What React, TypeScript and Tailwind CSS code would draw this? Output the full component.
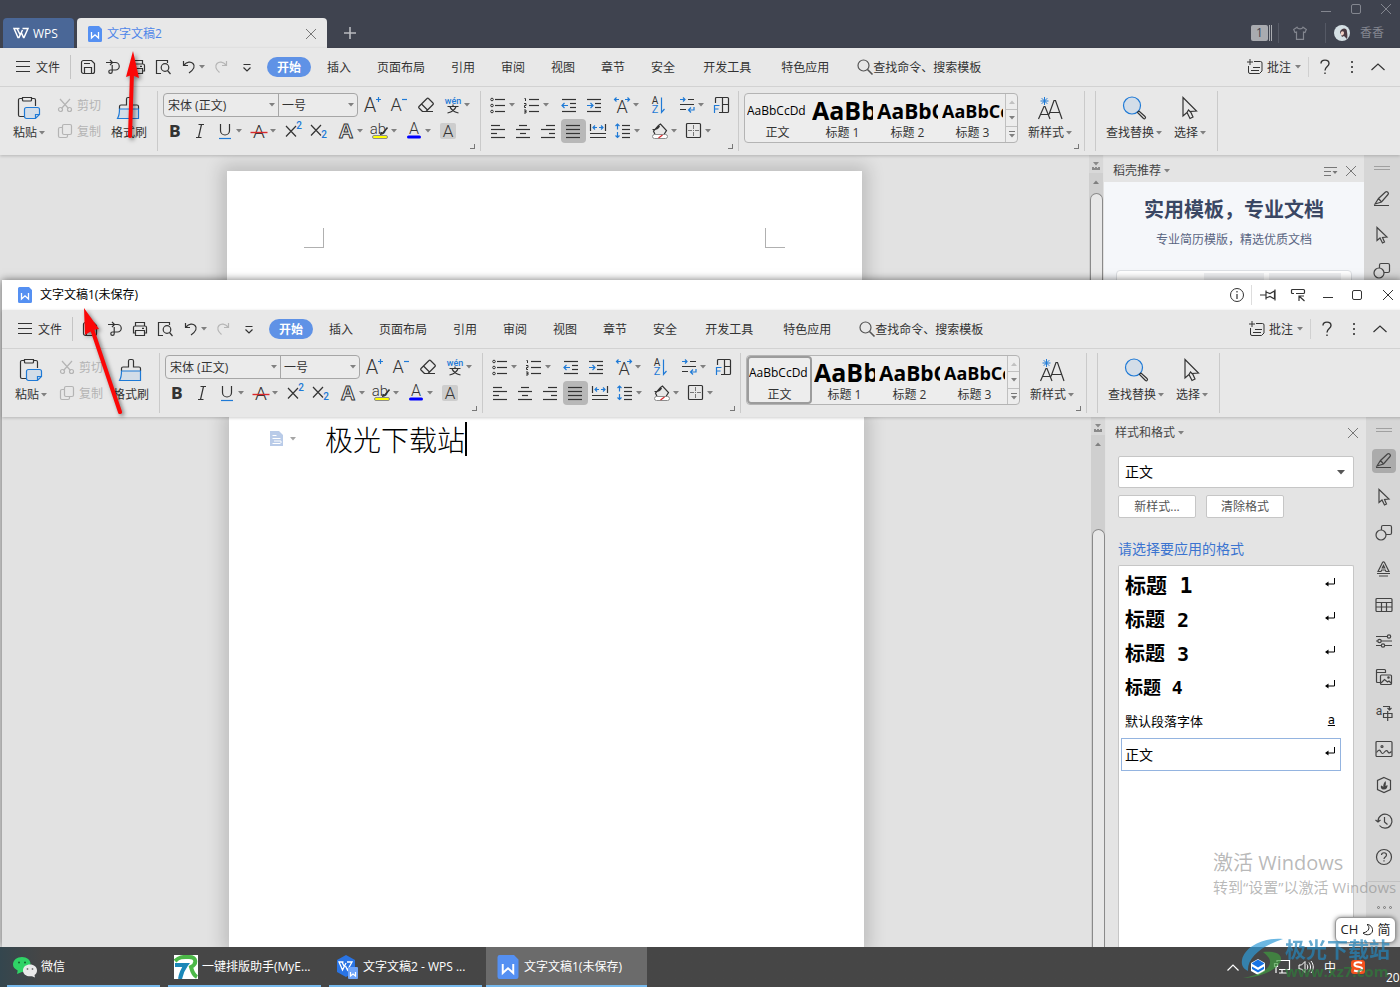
import { useState } from "react";
import type { ReactNode } from "react";
import { clsx } from "clsx";

type IconProps = {
  w?: number;
  h?: number;
  className?: string;
  children: ReactNode;
};

const BLUE = "#1f7ad6";

function Svg({ w = 22, h = 20, className, children }: IconProps) {
  return (
    <svg
      width={w}
      height={h}
      viewBox={`0 0 ${w} ${h}`}
      fill="none"
      stroke="currentColor"
      strokeWidth="1.2"
      className={clsx("shrink-0 overflow-visible", className)}
      aria-hidden="true"
    >
      {children}
    </svg>
  );
}

function Glyph({ x, y, size, color = "currentColor", weight = 300, children }: {
  x: number;
  y: number;
  size: number;
  color?: string;
  weight?: number;
  children: ReactNode;
}) {
  return (
    <text
      x={x}
      y={y}
      fontSize={size}
      fontWeight={weight}
      fontFamily='Roboto, "Noto Sans CJK SC", sans-serif'
      textAnchor="middle"
      fill={color}
      stroke="none"
    >
      {children}
    </text>
  );
}

function Caret({ className }: { className?: string }) {
  return (
    <svg width="6" height="4" viewBox="0 0 6 4" className={clsx("shrink-0 fill-[#808080]", className)} aria-hidden="true">
      <path d="M0 0h6L3 3.5z" />
    </svg>
  );
}

function Lines({ rows }: { rows: number[][] }) {
  return (
    <>
      {rows.map(([x1, x2, y]) => (
        <path key={y} d={`M${x1} ${y}H${x2}`} />
      ))}
    </>
  );
}

const icons = {
  save: (
    <Svg>
      <path d="M4.500 5.500a2 2 0 0 1 2-2h8l3 3v8a2 2 0 0 1-2 2h-9a2 2 0 0 1-2-2zM7.500 16v-5.500h7V16M7 6.500h6" />
    </Svg>
  ),
  exportPdf: (
    <Svg>
      <path d="M4 5.500h6M8 3l2.500 2.500L8 8M11 5.500h2.500a3.700 3.700 0 0 1 0 7.500H8.500a1.700 1.700 0 1 0 1.700 1.700V8" />
    </Svg>
  ),
  print: (
    <Svg>
      <path d="M6.500 7V3.500h9V7M6.500 14h-2V8.500a1.500 1.500 0 0 1 1.500-1.500h10a1.500 1.500 0 0 1 1.500 1.500V14h-2M6.500 11.500h9v5h-9zM13 9.300h2" />
    </Svg>
  ),
  preview: (
    <Svg>
      <path d="M9 16.500H4.500v-13h11V6" />
      <circle cx="13" cy="10.500" r="3.800" />
      <path d="M15.500 13.500l3 3.500" />
    </Svg>
  ),
  undo: (
    <Svg>
      <path d="M5.500 4v4.500H10M6 8C9 4.500 13 4.500 15 6.500c2.500 2.500 1 6-4 9.500" />
    </Svg>
  ),
  redo: (
    <Svg className="text-[#b5b5b5]">
      <path d="M16.500 4v4.500H12M16 8C13 4.500 9 4.500 7 6.500 4.500 9 6 12.500 9.500 15.500" />
    </Svg>
  ),
  more: (
    <Svg>
      <path d="M7.500 7.500h7M7.500 10.500l3.500 3.500 3.500-3.500" />
    </Svg>
  ),
  cut: (
    <Svg w={16} h={16}>
      <path d="M3 2l8.500 9.500M13 2L4.500 11.500" />
      <circle cx="3.500" cy="12.500" r="2" />
      <circle cx="12.500" cy="12.500" r="2" />
    </Svg>
  ),
  copy: (
    <Svg w={16} h={16}>
      <rect x="5.500" y="1.500" width="9" height="10" rx="1.500" />
      <path d="M5 4.500H3a1.500 1.500 0 0 0-1.500 1.500v7A1.500 1.500 0 0 0 3 14.500h6A1.500 1.500 0 0 0 10.500 13v-1" />
    </Svg>
  ),
  paste: (
    <Svg w={24} h={24}>
      <path d="M7.500 20.500H3a1.500 1.500 0 0 1-1.500-1.500V4A1.500 1.500 0 0 1 3 2.500h2M15 2.500h2a1.500 1.500 0 0 1 1.500 1.500v6" />
      <path d="M5.500 1.500h9V4a1 1 0 0 1-1 1h-7a1 1 0 0 1-1-1z" />
      <path d="M9.500 11.500h11a2 2 0 0 1 2 2v5l-4 4h-9a2 2 0 0 1-2-2v-7a2 2 0 0 1 2-2zM18.500 22.500v-4h4" fill="#d3dde8" stroke={BLUE} />
    </Svg>
  ),
  brush: (
    <Svg w={24} h={24}>
      <path d="M2.500 13V10.500A1.500 1.500 0 0 1 4 9h5.500V3A1.500 1.500 0 0 1 11 1.500h2A1.500 1.500 0 0 1 14.500 3v6H20a1.500 1.500 0 0 1 1.500 1.500V13" />
      <path d="M2.500 13h19v9.500H.5C2 20 2.500 17 2.500 13z" fill="#d3dde8" stroke={BLUE} />
    </Svg>
  ),
  grow: (
    <Svg>
      <Glyph x={9} y={17} size={20}>A</Glyph>
      <path d="M15 4.500h5M17.500 2v5" stroke={BLUE} />
    </Svg>
  ),
  shrink: (
    <Svg>
      <Glyph x={8} y={16} size={18}>A</Glyph>
      <path d="M14 4.500h5" stroke={BLUE} />
    </Svg>
  ),
  eraser: (
    <Svg>
      <path d="M7.500 16.500l-3.500-3.500a1 1 0 0 1 0-1.500L12 3.500a1 1 0 0 1 1.500 0l4.500 4.500a1 1 0 0 1 0 1.500L11 16.500M6.500 9l6 6M7 16.500h11" />
    </Svg>
  ),
  pinyin: (
    <Svg>
      <Glyph x={11} y={9} size={9} color={BLUE} weight={500}>wén</Glyph>
      <path d="M11 9.500v2M5.500 11.500h11M8 11.500c1 3.500 4 5.500 8.500 6.500M14 11.500c-1 3.500-4 5.500-8.500 6.500" />
    </Svg>
  ),
  bold: <Svg><Glyph x={11} y={16} size={17} weight={900}>B</Glyph></Svg>,
  italic: (
    <Svg>
      <path d="M9.500 3.500H15M7 16.500h5.500M12.500 3.500l-3 13" />
    </Svg>
  ),
  underline: (
    <Svg>
      <path d="M6.500 3v6.500a4.500 4.500 0 0 0 9 0V3" />
      <path d="M5 17.500h12" stroke={BLUE} />
    </Svg>
  ),
  strike: (
    <Svg>
      <Glyph x={11} y={17} size={19}>A</Glyph>
      <path d="M2.500 11.500h17" stroke="#d9292d" strokeWidth="1.400" />
    </Svg>
  ),
  sup: (
    <Svg>
      <path d="M4 5l10 10.500M14 5L4 15.500" />
      <Glyph x={17} y={8} size={10} color={BLUE} weight={500}>2</Glyph>
    </Svg>
  ),
  sub: (
    <Svg>
      <path d="M4 4l10 10.500M14 4L4 14.500" />
      <Glyph x={17} y={17} size={10} color={BLUE} weight={500}>2</Glyph>
    </Svg>
  ),
  effect: (
    <Svg>
      <text x="11" y="17" fontSize="20" fontWeight="700" fontFamily='"Liberation Sans", sans-serif' textAnchor="middle" fill="#efefef" strokeWidth="1">
        A
      </text>
    </Svg>
  ),
  highlight: (
    <Svg>
      <Glyph x={9} y={13} size={15}>ab</Glyph>
      <path d="M18.500 6.500l-5 6-1.500.5.500-2" strokeWidth="1.600" />
      <rect x="3.500" y="14.500" width="15" height="3" rx="1.500" fill="#ffff00" stroke="#8c8c8c" strokeWidth="1" />
    </Svg>
  ),
  fontColor: (
    <Svg>
      <Glyph x={11} y={13} size={16}>A</Glyph>
      <rect x="4" y="14.500" width="14" height="3" rx="1.500" fill="#0000ff" stroke="none" />
    </Svg>
  ),
  shade: (
    <Svg>
      <rect x="3" y="2" width="16" height="16" rx="2" fill="#cdcdcd" stroke="none" />
      <Glyph x={11} y={16} size={17}>A</Glyph>
    </Svg>
  ),
  bullets: (
    <Svg>
      <circle cx="5" cy="4.500" r="1.300" strokeWidth="1" />
      <circle cx="5" cy="10.500" r="1.300" strokeWidth="1" />
      <circle cx="5" cy="16.500" r="1.300" strokeWidth="1" />
      <Lines rows={[[8, 18, 4.5], [8, 18, 10.5], [8, 18, 16.5]]} />
    </Svg>
  ),
  numbers: (
    <Svg>
      <path d="M3.500 3.500h1V6M3 8.500h2v2H3.500v2H5M3 15h2v3H3M3.500 16.500H5" strokeWidth="1" />
      <Lines rows={[[8, 18, 4.5], [8, 18, 10.5], [8, 18, 16.5]]} />
    </Svg>
  ),
  outdent: (
    <Svg>
      <Lines rows={[[4, 18, 4.5], [12, 18, 8.5], [12, 18, 12.5], [4, 18, 16.5]]} />
      <path d="M10 10.500H4M6.500 8L4 10.500 6.500 13" stroke={BLUE} />
    </Svg>
  ),
  indent: (
    <Svg>
      <Lines rows={[[4, 18, 4.5], [12, 18, 8.5], [12, 18, 12.5], [4, 18, 16.5]]} />
      <path d="M4 10.500h6M7.500 8l2.500 2.500L7.500 13" stroke={BLUE} />
    </Svg>
  ),
  scale: (
    <Svg>
      <Glyph x={11} y={18} size={18}>A</Glyph>
      <path d="M8 4.500H3.500M5.500 2.500l-2 2 2 2M14 4.500h4.500M16.500 2.500l2 2-2 2" stroke={BLUE} />
    </Svg>
  ),
  sort: (
    <Svg>
      <Glyph x={8} y={9} size={10} weight={400}>A</Glyph>
      <Glyph x={8} y={18} size={11} color={BLUE} weight={400}>Z</Glyph>
      <path d="M14.500 2.500v15l3-3.500" stroke={BLUE} />
    </Svg>
  ),
  wrap: (
    <Svg>
      <path d="M4 4.500h5M7 2.500l2 2-2 2M18 12v3h-5M15 12.500L12.500 15l2.500 2.500" stroke={BLUE} />
      <path d="M12 4.500h6M4 9.500h14M4 14.500h6" />
    </Svg>
  ),
  frame: (
    <Svg>
      <path d="M5.500 8V3.500a1 1 0 0 1 1-1h11a1 1 0 0 1 1 1v13a1 1 0 0 1-1 1H9M12.500 3v14M12 9.500h6.500" />
      <path d="M4.500 18v-7.500h5M4.500 14h4" stroke={BLUE} />
    </Svg>
  ),
  left: <Svg><Lines rows={[[4, 13, 4.5], [4, 18, 8.5], [4, 10, 12.5], [4, 18, 16.5]]} /></Svg>,
  center: <Svg><Lines rows={[[7, 15, 4.5], [4, 18, 8.5], [8, 14, 12.5], [4, 18, 16.5]]} /></Svg>,
  right: <Svg><Lines rows={[[9, 18, 4.5], [4, 18, 8.5], [12, 18, 12.5], [4, 18, 16.5]]} /></Svg>,
  justify: <Svg><Lines rows={[[4, 18, 4.5], [4, 18, 8.5], [4, 18, 12.5], [4, 18, 16.5]]} /></Svg>,
  distribute: (
    <Svg>
      <path d="M3.500 3v7M18.500 3v7M3 12.500h16M3 16.500h16" />
      <path d="M10 6.500H6M8 4.500l-2 2 2 2M12 6.500h4M14 4.500l2 2-2 2" stroke={BLUE} />
    </Svg>
  ),
  spacing: (
    <Svg>
      <Lines rows={[[10, 18, 4.5], [10, 18, 8.5], [10, 18, 12.5], [10, 18, 16.5]]} />
      <path d="M5.500 3v5.500M3.500 5l2-2 2 2M5.500 11v5.500M3.500 14.500l2 2 2-2" stroke={BLUE} />
    </Svg>
  ),
  bucket: (
    <Svg>
      <path d="M9.500 4.500L11.500 3l6 6.500-2.500 4H6L4.500 10zM3.500 8.500c4 0 6-1 7-3.500" />
      <rect x="3.500" y="13.500" width="15" height="4" rx="2" fill="#fff" stroke="#8c8c8c" strokeWidth="1" />
      <path d="M9.500 17l4-3" stroke="#d9292d" />
    </Svg>
  ),
  borders: (
    <Svg>
      <rect x="3.500" y="2.500" width="14" height="14" rx="1" />
      <path d="M10.500 4v4M10.500 11v4M5 9.500h4M12 9.500h4M10 9.500h1" strokeWidth="1" stroke="#777" />
    </Svg>
  ),
  newStyle: (
    <Svg w={24} h={24}>
      <path d="M6.500 1v8M2.500 5h8M3.700 2.200l5.600 5.600M9.300 2.200L3.700 7.800" stroke={BLUE} strokeWidth="1" />
      <path d="M.5 23L6 10.500h1L12 23M2.500 18.500h8M11 18.500L16 4.500h1.500L24 23M12 16.500h9.500" />
    </Svg>
  ),
  find: (
    <Svg w={24} h={24}>
      <circle cx="10" cy="9.500" r="8.500" fill="#d3dde8" stroke={BLUE} />
      <path d="M15.500 16.500l1.500-1.500 6 5.500a1.200 1.200 0 0 1-1.500 2z" />
    </Svg>
  ),
  pointer: (
    <Svg w={24} h={24}>
      <path d="M5 1.500V20l4-3.500L12 22.500l3-1.500-2.500-5.500 6-.5zM9 16.500l1.500-2.500 2 2" />
    </Svg>
  ),
};

type IconName = keyof typeof icons;

type Tool = { icon: IconName; label: string; menu?: boolean; gap?: string };

const fontRow: Tool[] = [
  { icon: "grow", label: "增大字号", gap: "ml-0.5" },
  { icon: "shrink", label: "减小字号", gap: "ml-0.5" },
  { icon: "eraser", label: "清除格式", gap: "ml-0.5" },
  { icon: "pinyin", label: "拼音指南", menu: true, gap: "ml-0.5" },
];

const formatRow: Tool[] = [
  { icon: "bold", label: "加粗" },
  { icon: "italic", label: "倾斜" },
  { icon: "underline", label: "下划线", menu: true },
  { icon: "strike", label: "删除线", menu: true },
  { icon: "sup", label: "上标" },
  { icon: "sub", label: "下标" },
  { icon: "effect", label: "文字效果", menu: true, gap: "ml-[3px]" },
  { icon: "highlight", label: "突出显示", menu: true },
  { icon: "fontColor", label: "字体颜色", menu: true },
  { icon: "shade", label: "字符底纹" },
];

const listRow: Tool[] = [
  { icon: "bullets", label: "项目符号", menu: true },
  { icon: "numbers", label: "编号", menu: true },
  { icon: "outdent", label: "减少缩进量", gap: "ml-[3px]" },
  { icon: "indent", label: "增加缩进量" },
  { icon: "scale", label: "中文版式", menu: true, gap: "ml-[3px]" },
  { icon: "sort", label: "排序", gap: "ml-0.5" },
  { icon: "wrap", label: "显示段落标记", menu: true, gap: "ml-1" },
  { icon: "frame", label: "制表位" },
];

const alignRow: Tool[] = [
  { icon: "left", label: "左对齐" },
  { icon: "center", label: "居中" },
  { icon: "right", label: "右对齐" },
  { icon: "justify", label: "两端对齐" },
  { icon: "distribute", label: "分散对齐" },
  { icon: "spacing", label: "行距", menu: true },
  { icon: "bucket", label: "底纹颜色", menu: true, gap: "ml-[3px]" },
  { icon: "borders", label: "边框", menu: true },
];

function ToolRow({ tools, active }: { tools: Tool[]; active?: IconName }) {
  return (
    <div className="flex h-[26px] items-center">
      {tools.map((t) => (
        <button
          key={t.icon}
          aria-label={t.label}
          className={clsx(
            "flex h-6 shrink-0 items-center rounded pl-px",
            t.menu ? "w-[34px]" : "w-[25px]",
            t.gap,
            active === t.icon && "bg-[#b8b8b8]"
          )}
        >
          {icons[t.icon]}
          {t.menu && <Caret />}
        </button>
      ))}
    </div>
  );
}

function BigButton({ icon, label, menu, className }: { icon: IconName; label: string; menu?: boolean; className?: string }) {
  return (
    <button className={clsx("flex shrink-0 flex-col items-center pt-1", className)}>
      {icons[icon]}
      <span className="mt-1 flex h-[18px] items-center gap-0.5 whitespace-nowrap">
        {label}
        {menu && <Caret />}
      </span>
    </button>
  );
}

function Launcher() {
  return <span className="absolute right-[5px] bottom-0.5 size-[5px] border-r border-b border-[#777]" />;
}

function Group({ className, children }: { className?: string; children?: ReactNode }) {
  return (
    <div className={clsx("relative my-1 flex shrink-0 border-r border-[#cacaca] pt-px", className)}>{children}</div>
  );
}

const styleItems = [
  { name: "正文", sample: "AaBbCcDd", className: "text-xs" },
  { name: "标题 1", sample: "AaBb", className: "text-[25px] font-bold" },
  { name: "标题 2", sample: "AaBbC", className: "text-[21px] font-bold" },
  { name: "标题 3", sample: "AaBbCc", className: "text-lg font-bold" },
];

function StyleGallery({ selected }: { selected?: string }) {
  return (
    <div className="mt-px ml-[5px] flex h-[50px] w-[274px] rounded border border-[#b4b4b4] bg-[#ededed]">
      {styleItems.map((s) => (
        <button
          key={s.name}
          className={clsx(
            "flex w-[65px] shrink-0 flex-col overflow-hidden border-2 pt-px",
            selected === s.name ? "rounded-sm border-[#9c9c9c]" : "border-transparent"
          )}
        >
          <span className={clsx("flex h-[26px] w-full items-center overflow-hidden pt-px font-['Open_Sans',sans-serif] text-black", s.className)}>
            {s.sample}
          </span>
          <span className="h-4 w-full pt-0.5 text-center leading-4">{s.name}</span>
        </button>
      ))}
      <div className="flex flex-1 flex-col divide-y divide-[#c0c0c0] border-l border-[#c0c0c0]">
        <button aria-label="上一行" className="flex flex-1 items-center justify-center">
          <Caret className="rotate-180 opacity-40" />
        </button>
        <button aria-label="下一行" className="flex flex-1 items-center justify-center">
          <Caret />
        </button>
        <button aria-label="更多样式" className="flex flex-1 flex-col items-center justify-center gap-0.5">
          <span className="h-px w-1.5 bg-[#777]" />
          <Caret />
        </button>
      </div>
    </div>
  );
}

const menuTabs = ["插入", "页面布局", "引用", "审阅", "视图", "章节", "安全", "开发工具", "特色应用"];

function MenuBar() {
  const quick: { icon: IconName; label: string; className: string }[] = [
    { icon: "save", label: "保存", className: "ml-[6px]" },
    { icon: "exportPdf", label: "输出为PDF", className: "ml-[3px]" },
    { icon: "print", label: "打印", className: "ml-[3px]" },
    { icon: "preview", label: "打印预览", className: "ml-[3px]" },
    { icon: "undo", label: "撤销", className: "ml-1" },
  ];

  return (
    <div className="box-content flex h-[38px] shrink-0 items-center border-b border-[#d2d2d2] whitespace-nowrap">
      <button className="ml-4 flex items-center gap-[6px]">
        <Svg w={14} h={14}>
          <path d="M0 1.500h14M0 6.500h14M0 11.500h14" />
        </Svg>
        <span className="pt-0.5">文件</span>
      </button>
      <span className="ml-[10px] h-6 w-px bg-[#c4c4c4]" />
      {quick.map((q) => (
        <button key={q.icon} aria-label={q.label} className={q.className}>
          {icons[q.icon]}
        </button>
      ))}
      <Caret className="-ml-px" />
      <button aria-label="恢复" className="ml-[5px]">{icons.redo}</button>
      <button aria-label="自定义快速访问" className="ml-1">{icons.more}</button>
      <button className="ml-[9px] h-5 w-11 shrink-0 rounded-full bg-[#5f92e6] pt-px font-bold text-white">开始</button>
      <div className="ml-[3px] flex pt-0.5">
        {menuTabs.map((t, i) => (
          <button key={t} className={i > 6 ? "px-[15px]" : "px-[13px]"}>
            {t}
          </button>
        ))}
      </div>
      <label className="ml-[13px] flex min-w-0 items-center">
        <Svg w={16} h={16} className="text-[#555]">
          <circle cx="6.500" cy="6.500" r="5.500" />
          <path d="M10.500 10.500l5 5" strokeWidth="1.600" />
        </Svg>
        <input
          aria-label="查找命令、搜索模板"
          placeholder="查找命令、搜索模板"
          className="w-32 bg-transparent pt-px outline-none placeholder:text-[#333] placeholder:opacity-100"
        />
      </label>
      <div className="ml-auto flex shrink-0 items-center pr-[15px]">
        <button className="flex items-center gap-1">
          <Svg w={16} h={16}>
            <path d="M1.500 7v6a1.500 1.500 0 0 0 1.500 1.500h9.500l2.500-2.500V4A1.500 1.500 0 0 0 13.500 2.500H7M3 0v6M0 3h6M6 8.500h7M4 11.500h8" strokeWidth="1" />
          </Svg>
          <span className="pt-0.5">批注</span>
          <Caret />
        </button>
        <span className="ml-[7px] h-5 w-px bg-[#d0d0d0]" />
        <button aria-label="帮助" className="ml-2">
          <Svg w={16} h={16}>
            <path d="M4 4.500C4 0 12 0 12 4.500c0 3-4 3-4 7M8 13.500V15" strokeWidth="1.400" />
          </Svg>
        </button>
        <button aria-label="更多" className="ml-[15px] flex w-2 flex-col items-center gap-[3px]">
          <span className="size-0.5 bg-[#555]" />
          <span className="size-0.5 bg-[#555]" />
          <span className="size-0.5 bg-[#555]" />
        </button>
        <button aria-label="折叠功能区" className="ml-[15px]">
          <Svg w={14} h={8}>
            <path d="M.5 7L7 1l6.500 6" />
          </Svg>
        </button>
      </div>
    </div>
  );
}

function Ribbon({ selectedStyle }: { selectedStyle?: string }) {
  return (
    <div className="relative z-10 shrink-0 bg-[#e8e8e8] text-xs text-[#333] shadow-[0_1px_3px_rgba(0,0,0,0.2)]">
      <MenuBar />
      <div className="flex h-[68px]">
        <Group className="w-[158px] pl-[11px]">
          <BigButton icon="paste" label="粘贴" menu className="w-9" />
          <div className="ml-[10px] flex flex-col text-[#b4b4b4]">
            <button className="flex h-[26px] items-center gap-1">
              {icons.cut}
              <span className="pt-0.5">剪切</span>
            </button>
            <button className="flex h-[26px] items-center gap-1">
              {icons.copy}
              <span className="pt-0.5">复制</span>
            </button>
          </div>
          <BigButton icon="brush" label="格式刷" className="ml-[6px] w-11" />
        </Group>

        <Group className="w-[323px] flex-col pl-[5px]">
          <div className="flex items-center">
            <div className="flex h-6 w-[195px] shrink-0 rounded border border-[#a6a6a6] bg-[#ebebeb]">
              <label className="flex w-[115px] items-center border-r border-[#a6a6a6] pr-[3px]">
                <select aria-label="字体" className="min-w-0 flex-1 appearance-none bg-transparent pt-0.5 pl-1 outline-none">
                  <option>宋体 (正文)</option>
                </select>
                <Caret />
              </label>
              <label className="flex flex-1 items-center pr-[3px]">
                <select aria-label="字号" className="min-w-0 flex-1 appearance-none bg-transparent pt-0.5 pl-[3px] outline-none">
                  <option>一号</option>
                </select>
                <Caret />
              </label>
            </div>
            <ToolRow tools={fontRow} />
          </div>
          <ToolRow tools={formatRow} />
          <Launcher />
        </Group>

        <Group className="w-[258px] flex-col pl-[5px]">
          <ToolRow tools={listRow} />
          <ToolRow tools={alignRow} active="justify" />
          <Launcher />
        </Group>

        <Group className="w-[346px]">
          <StyleGallery selected={selectedStyle} />
          <BigButton icon="newStyle" label="新样式" menu className="ml-2 w-12" />
          <Launcher />
        </Group>
        <Group className="w-[11px]" />
        <Group className="w-[122px] pl-2">
          <BigButton icon="find" label="查找替换" menu className="w-[60px]" />
          <BigButton icon="pointer" label="选择" menu className="ml-2 w-9" />
        </Group>
      </div>
    </div>
  );
}

const sideIcons: { label: string; art: ReactNode }[] = [
  { label: "样式和格式", art: <path d="M1 15.500h15M2 14l3.500-5.500L12.500 2a1.500 1.500 0 0 1 2 0l.5.500a1.500 1.500 0 0 1 0 2L8.500 12 2 14zM5.500 8.500l3 3.500" /> },
  { label: "选择窗格", art: <path d="M4 1.500v13l3-2.500 2.500 5 2-1-2-4.500 4.500-.5z" /> },
  { label: "形状", art: <><circle cx="6" cy="11" r="5" /><path d="M6.500 6V3A1.500 1.500 0 0 1 8 1.500h7A1.500 1.500 0 0 1 16.500 3v6a1.500 1.500 0 0 1-1.500 1.500h-4" /></> },
  { label: "艺术字", art: <><path d="M3 11.500L7.500 2.500a1.200 1.200 0 0 1 2 0L14 11.500h-3l-.7-1.500H6.700L6 11.500zM7.300 8h2.400L8.500 5.500z" /><path d="M2 13.500h13M4 16h9" /></> },
  { label: "表格", art: <path d="M1 3.500a1 1 0 0 1 1-1h14a1 1 0 0 1 1 1v11a1 1 0 0 1-1 1H2a1 1 0 0 1-1-1zM1 6.500h16M1 11h16M6.500 6.500v9M11.500 6.500v9" /> },
  { label: "设置", art: <><path d="M1 4.500h11M1 9h2M6 9h11M1 13.500h5M9.500 13.500H17" /><circle cx="14" cy="4.500" r="1.700" /><circle cx="4.500" cy="9" r="1.700" /><circle cx="8" cy="13.500" r="1.700" /></> },
  { label: "素材", art: <><path d="M5 14.500H2.500a1 1 0 0 1-1-1v-11a1 1 0 0 1 1-1h7a1 1 0 0 1 1 1V5M1.500 4.500h9" /><rect x="5.500" y="7" width="11" height="9.500" rx="1" /><path d="M6 15l3.500-3.500 3 2.500 1.500-1 2.500 2.500" /><circle cx="13.500" cy="9.500" r=".7" /></> },
  { label: "翻译", art: <><text x="4" y="11" fontSize="12" textAnchor="middle" fill="currentColor" stroke="none" fontFamily="Roboto, sans-serif">a</text><path d="M8 2.500h6.500V6M12.500 4l2 2 2-2M8.500 9.500h8.500v4H8.500zM12.700 7v10" /></> },
  { label: "图片", art: <><rect x="1" y="1.500" width="16" height="15" rx="1" /><circle cx="7" cy="6.500" r="1" /><path d="M1.500 12.500C4 9 5 10 6 12s2 2 3.500 0 3-1.500 3.500 0 2 1 3.500-.5" /></> },
  { label: "稻壳", art: <><path d="M9 1.500l6.500 3v9L9 16.500l-6.500-3v-9z" /><path d="M9 13.500c-3 0-3.500-2-3-4 1 .2 1.700.7 2.300 1.500C8 8.500 9 6.500 10.500 5c.7 2 .3 3.500 0 5l2-1c.2 2.500-1 4.500-3.500 4.500z" fill="currentColor" stroke="none" /></> },
  { label: "历史", art: <path d="M3 9a7 7 0 1 1 1.500 4.500M.5 8L3 10l2.500-2M9.500 5v5l3 2.500" /> },
  { label: "帮助", art: <><circle cx="9" cy="9" r="7.500" /><path d="M6.500 7C6.500 4 11.500 4 11.500 7c0 2-2.500 2-2.500 4M9 12.300v1.200" /></> },
];

function SideBar({ active }: { active?: string }) {
  return (
    <aside className="flex w-9 shrink-0 flex-col items-center overflow-hidden bg-[#d6d6d6] pt-[11px] text-[#444]">
      <span className="h-1 w-4 shrink-0 border-y border-[#a0a0a0]" />
      <div className="mt-[17px] flex flex-col gap-3">
        {sideIcons.map((s) => (
          <button
            key={s.label}
            aria-label={s.label}
            className={clsx("flex size-6 items-center justify-center rounded pr-px", active === s.label && "bg-[#ababab]")}
          >
            <Svg w={18} h={18}>{s.art}</Svg>
          </button>
        ))}
      </div>
      <span className="mt-3 h-px w-8 shrink-0 bg-[#c2c2c2]" />
      <button aria-label="更多" className="mt-6 flex gap-[3px]">
        <span className="size-[3px] rounded-full border border-[#777]" />
        <span className="size-[3px] rounded-full border border-[#777]" />
        <span className="size-[3px] rounded-full border border-[#777]" />
      </button>
    </aside>
  );
}

function ScrollBar({ thumb }: { thumb: string }) {
  return (
    <div className="flex w-[14px] shrink-0 flex-col items-center bg-[#cfcfcf]">
      <div className="flex h-[18px] w-full shrink-0 items-center justify-center bg-[#d8d8d8] pt-1">
        <svg width="8" height="8" viewBox="0 0 8 8" className="fill-[#8a8a8a]" aria-hidden="true">
          <path d="M1 0h6L4 3.500zM0 5h2v1h1V5h2v1h1V5h2v3H0z" />
        </svg>
      </div>
      <Caret className="mt-[7px] rotate-180" />
      <div className={clsx("w-[13px] flex-1 rounded-t-full border border-b-0 border-[#8a8a8a] bg-[#e8e8e8]", thumb)} />
    </div>
  );
}

function PaneHeader({ title, children }: { title: string; children: ReactNode }) {
  return (
    <div className="flex h-[27px] shrink-0 items-center pt-1 pr-2 pl-[9px] text-[#444]">
      <button className="flex items-center gap-[3px]">
        {title}
        <Caret />
      </button>
      <div className="ml-auto flex items-center gap-2 text-[#777]">{children}</div>
    </div>
  );
}

function CloseIcon() {
  return (
    <svg width="10" height="10" viewBox="0 0 10 10" stroke="currentColor" strokeWidth="1" aria-hidden="true">
      <path d="M0 0l10 10M10 0L0 10" />
    </svg>
  );
}

function WriterIcon({ className }: { className?: string }) {
  return (
    <svg viewBox="0 0 14 16" className={clsx("shrink-0", className)} aria-hidden="true">
      <path d="M1.500 0H11l3 3v11.500a1.500 1.500 0 0 1-1.500 1.500h-11A1.500 1.500 0 0 1 0 14.500v-13A1.500 1.500 0 0 1 1.500 0z" fill="#5590f2" />
      <path d="M3.500 6v6L7 8.800l3.500 3.200V6" fill="none" stroke="#fff" strokeWidth="1.300" />
    </svg>
  );
}

const paperShadow = "shadow-[0_0_16px_6px_rgba(0,0,0,0.16)]";

function BackWindow() {
  return (
    <section className="absolute inset-0 flex flex-col overflow-hidden bg-[#e2e2e2]">
      <header className="flex h-12 shrink-0 bg-[#3f434f] text-xs">
        <div className="flex items-end pl-[3px]">
          <button className="flex h-[30px] w-[71px] items-center gap-1 rounded-t bg-[#4a6797] pl-[10px] text-white">
            <svg width="16" height="12" viewBox="0 0 16 12" fill="none" stroke="#fff" strokeWidth="1.500" aria-hidden="true">
              <path d="M6.500 1.500H1l4 9h1L9.500 3M4 1.500l3 6M8.500 6l2 4.500h.5L15 1.500H9.500" />
            </svg>
            <span className="pt-px">WPS</span>
          </button>
          <div className="ml-[3px] flex h-[30px] w-[250px] items-center rounded-t bg-[#e8e8e8] pt-0.5 pr-[11px] pl-[11px] text-[#4f86e8]">
            <WriterIcon className="h-4 w-[14px]" />
            <span className="ml-[5px]">文字文稿2</span>
            <button aria-label="关闭标签" className="ml-auto text-[#777]">
              <CloseIcon />
            </button>
          </div>
          <button aria-label="新建标签" className="mb-[9px] ml-[17px] text-[#b9bbc0]">
            <Svg w={12} h={12}>
              <path d="M6 0v12M0 6h12" strokeWidth="1.600" />
            </Svg>
          </button>
        </div>
        <div className="ml-auto flex flex-col items-end text-[#83868f]">
          <div className="flex h-[18px] items-center gap-5 pr-[9px]">
            <button aria-label="最小化" className="mt-1 h-px w-[10px] bg-[#83868f]" />
            <button aria-label="最大化" className="size-[10px] rounded-xs border border-[#83868f]" />
            <button aria-label="关闭"><CloseIcon /></button>
          </div>
          <div className="flex h-[30px] items-center pr-4">
            <span className="flex h-4 w-[17px] items-center justify-center rounded-xs bg-[#a9abb0] text-[#3f434f]">1</span>
            <span className="ml-px h-4 w-[3px] border-x border-[#a9abb0]" />
            <span className="ml-[6px] h-5 w-px bg-[#555965]" />
            <button aria-label="皮肤" className="ml-[14px]">
              <Svg w={14} h={14}>
                <path d="M4 1.200L.7 3.500 2 6.500l1.500-.5v7.300h7V6l1.500.5 1.300-3L10 1.200C9 3.500 5 3.500 4 1.200z" />
              </Svg>
            </button>
            <span className="ml-[18px] h-5 w-px bg-[#555965]" />
            <svg width="16" height="16" viewBox="0 0 16 16" className="ml-2" aria-hidden="true">
              <circle cx="8" cy="8" r="8" fill="#d5e0e4" />
              <path d="M6 7c1-4 7-5 7 0 .5 3 .5 5 0 7l-3-3-2 1z" fill="#4b3b43" />
              <path d="M7 7c1-1 3-1 3 1s-2 3-3 2z" fill="#f0cfc4" />
            </svg>
            <span className="ml-[10px]">香香</span>
          </div>
        </div>
      </header>

      <Ribbon />

      <div className="flex min-h-0 flex-1 text-xs">
        <main className="flex min-w-0 flex-1 justify-center overflow-hidden pt-4">
          <div className={clsx("flex w-[635px] justify-between bg-white px-[77px] pt-[57px]", paperShadow)}>
            <span className="size-5 border-r border-b border-[#b0b0b0]" />
            <span className="size-5 border-b border-l border-[#b0b0b0]" />
          </div>
        </main>
        <ScrollBar thumb="mt-[9px]" />
        <div className="ml-px flex w-[260px] shrink-0 flex-col bg-[#e4e4e4]">
          <PaneHeader title="稻壳推荐">
            <button aria-label="列表">
              <Svg w={14} h={10}>
                <path d="M0 1.500h13M0 5.500h7M0 9.500h7" strokeWidth="1" />
                <path d="M8.500 5h5L11 8z" fill="currentColor" stroke="none" />
              </Svg>
            </button>
            <button aria-label="关闭窗格"><CloseIcon /></button>
          </PaneHeader>
          <div className="flex flex-1 flex-col items-center bg-[#f5f7fa] px-3 pt-3">
            <h2 className="text-xl leading-8 font-bold text-[#3a4763]">实用模板，专业文档</h2>
            <p className="mt-1 leading-5 text-[#596582]">专业简历模版，精选优质文档</p>
            <div className="mt-5 flex h-40 w-full justify-end gap-[5px] rounded-t border border-[#dcdfe3] bg-white pt-0.5 pr-[10px]">
              <span className="h-20 w-[60px] bg-[#eff0f2]" />
              <span className="h-20 w-[72px] bg-[#eff0f2]" />
            </div>
          </div>
        </div>
        <SideBar />
      </div>
    </section>
  );
}

const returnMark = (
  <Svg w={10} h={10} className="text-black">
    <path d="M9.500 0v6H2" strokeWidth="1" />
    <path d="M0 6l3.500-2.500v5z" fill="currentColor" stroke="none" />
  </Svg>
);

const paneStyles = [
  { name: "标题 1", className: "text-[21px] font-bold h-[34px]" },
  { name: "标题 2", className: "text-xl font-bold h-[34px]" },
  { name: "标题 3", className: "text-xl font-bold h-[34px]" },
  { name: "标题 4", className: "text-lg font-bold h-[34px]" },
  { name: "默认段落字体", className: "text-[13px] h-[33px]" },
  { name: "正文", className: "text-sm h-[33px]" },
];

function StylePane() {
  const [selected, setSelected] = useState("正文");

  return (
    <div className="ml-px flex w-[260px] shrink-0 flex-col bg-[#e4e4e4]">
      <PaneHeader title="样式和格式">
        <button aria-label="关闭窗格"><CloseIcon /></button>
      </PaneHeader>
      <div className="flex min-h-0 flex-1 flex-col pt-3 pr-3 pl-3">
        <label className="flex h-8 shrink-0 items-center rounded-xs border border-[#c6c6c6] bg-white pr-2 text-sm text-black">
          <select aria-label="当前样式" className="flex-1 appearance-none bg-transparent pl-[6px] outline-none">
            <option>正文</option>
          </select>
          <svg width="8" height="5" viewBox="0 0 8 5" className="fill-[#555]" aria-hidden="true">
            <path d="M0 0h8L4 4.500z" />
          </svg>
        </label>
        <div className="mt-[7px] flex gap-[10px] text-[#555]">
          <button className="h-[23px] w-[78px] rounded-xs border border-[#c6c6c6] bg-white pt-px leading-5">新样式...</button>
          <button className="h-[23px] w-[78px] rounded-xs border border-[#c6c6c6] bg-white pt-px leading-5">清除格式</button>
        </div>
        <h3 className="mt-5 text-sm leading-[22px] text-[#3b74d0]">请选择要应用的格式</h3>
        <div className="mt-[5px] flex min-h-0 flex-1 flex-col rounded-t-xs border border-b-0 border-[#c6c6c6] bg-white px-0.5 pt-[3px] text-black">
          {paneStyles.map((s) => (
            <button
              key={s.name}
              onClick={() => setSelected(s.name)}
              className={clsx(
                "mr-[10px] flex shrink-0 items-center border pr-[5px] pl-[3px] text-left font-['DejaVu_Sans_Mono','Noto_Sans_CJK_SC',monospace]",
                s.className,
                selected === s.name ? "border-[#94b4e0]" : "border-transparent"
              )}
            >
              <span className="flex-1">{s.name}</span>
              {s.name === "默认段落字体" ? <span className="pb-1 text-xs underline">a</span> : <span className="pb-1.5">{returnMark}</span>}
            </button>
          ))}
        </div>
      </div>
    </div>
  );
}

function FrontWindow() {
  return (
    <section className="absolute top-[280px] bottom-0 left-0.5 z-10 flex w-full flex-col bg-[#e2e2e2] shadow-[0_0_8px_rgba(0,0,0,0.55)]">
      <header className="flex h-[30px] shrink-0 items-center bg-white pr-[9px] pl-4 text-xs text-black">
        <WriterIcon className="h-4 w-[14px]" />
        <span className="ml-2">文字文稿1(未保存)</span>
        <div className="ml-auto flex items-center text-[#333]">
          <button aria-label="信息">
            <Svg w={14} h={14}>
              <circle cx="7" cy="7" r="6.500" strokeWidth="1" />
              <path d="M7 6v5M7 3v1.500" />
            </Svg>
          </button>
          <span className="ml-[7px] h-5 w-px bg-[#ddd]" />
          <button aria-label="固定" className="ml-2">
            <Svg w={16} h={12}>
              <path d="M0 6h6M6 1.500v9M6 3l4 1.500L14.500 2v8L10 7.500 6 9M15 .5v11" />
            </Svg>
          </button>
          <button aria-label="合并窗口" className="ml-[15px]">
            <Svg w={14} h={14}>
              <path d="M3 5.500H1.500a1 1 0 0 1-1-1v-2a1 1 0 0 1 1-1h11a1 1 0 0 1 1 1v2a1 1 0 0 1-1 1H5M8 13V8h5M8 8l5.500 5" />
            </Svg>
          </button>
          <button aria-label="最小化" className="mt-1 ml-[18px] h-px w-[10px] bg-[#333]" />
          <button aria-label="最大化" className="ml-[19px] size-[10px] rounded-xs border border-[#333]" />
          <button aria-label="关闭" className="ml-[21px]"><CloseIcon /></button>
        </div>
      </header>

      <Ribbon selectedStyle="正文" />

      <div className="flex min-h-0 flex-1 text-xs">
        <main className="flex min-w-0 flex-1 justify-center overflow-hidden">
          <div className={clsx("flex w-[635px] items-start bg-white pt-1 pl-[41px]", paperShadow)}>
            <button aria-label="段落布局" className="mt-[10px] flex items-center gap-[6px]">
              <svg width="14" height="16" viewBox="0 0 14 16" aria-hidden="true">
                <path d="M0 0h9l4 4v11H0z" fill="#b9cbe8" />
                <path d="M2.500 4.500h4M2.500 7.500h8M2.500 12.500h8M4 10h7v2" fill="none" stroke="#fff" />
              </svg>
              <Caret className="opacity-70" />
            </button>
            <p className="ml-[29px] flex items-center font-['Noto_Sans_CJK_SC',sans-serif] text-[28px] leading-9 font-light text-black">
              极光下载站
              <span className="h-[34px] w-0.5 bg-black" />
            </p>
          </div>
        </main>
        <ScrollBar thumb="mt-[83px]" />
        <StylePane />
        <SideBar active="样式和格式" />
      </div>
    </section>
  );
}

const tasks = [
  {
    title: "微信",
    icon: (
      <svg width="24" height="24" viewBox="0 0 24 24" aria-hidden="true">
        <path d="M9 2c5 0 8.500 3 8.500 7S14 17 9 17l-5 2 .7-3.500C2 14 0 12.500 0 9.500 0 5 4 2 9 2z" fill="#2fd366" />
        <path d="M17 9.500c4 0 7 2.500 7 6 0 2-1 3.500-2.500 4.500l.5 2.500-3-1.300c-5.500.8-9-2-9-5.700s3-6 7-6z" fill="#e9e9e9" />
        <circle cx="6" cy="7.500" r="1" fill="#14632f" />
        <circle cx="12" cy="7.500" r="1" fill="#14632f" />
        <circle cx="14.500" cy="14" r=".9" fill="#777" />
        <circle cx="19.500" cy="14" r=".9" fill="#777" />
      </svg>
    ),
  },
  {
    title: "一键排版助手(MyE...",
    icon: (
      <svg width="24" height="24" viewBox="0 0 24 24" aria-hidden="true">
        <path d="M0 0h24v24H0z" fill="#fff" />
        <path d="M1 6C6 1 10 2 15 2c8 0 8 7 2 10 1 4 2 8 6 10" fill="none" stroke="#4cb848" strokeWidth="4" />
        <path d="M1 10h11C9 14 7 18 6 24" fill="none" stroke="#1b87b8" strokeWidth="4" />
      </svg>
    ),
  },
  {
    title: "文字文稿2 - WPS ...",
    icon: (
      <svg width="24" height="24" viewBox="0 0 24 24" aria-hidden="true">
        <path d="M11 0l9 5v12l-9 5-9-5V5z" fill="#2a74e4" />
        <path d="M8.500 7H4l3.500 8L11 8M7 7l2 4M10.500 11l2 4L17 7h-5" fill="none" stroke="#fff" strokeWidth="1.300" />
        <rect x="13" y="12" width="10" height="12" rx="1" fill="#6ea3f8" />
        <path d="M15.500 17v4l2.500-2 2.500 2v-4" fill="none" stroke="#fff" strokeWidth="1.200" />
      </svg>
    ),
  },
  { title: "文字文稿1(未保存)", icon: <WriterIcon className="h-6 w-6" />, active: true },
];

function TaskBar() {
  return (
    <footer className="flex h-10 shrink-0 overflow-hidden bg-linear-to-r from-[#34464e] via-[#464646] via-3% to-[#464646] pl-[3px] text-xs text-white">
      {tasks.map((t) => (
        <button key={t.title} className={clsx("flex w-[161px] shrink-0 flex-col", t.active && "bg-[#6b6b6b]")}>
          <span className="flex flex-1 items-center gap-1 pt-0.5 pl-[10px] whitespace-nowrap">
            {t.icon}
            {t.title}
          </span>
          <span className={clsx("h-0.5 self-stretch bg-[#76b9ed]", !t.active && "mx-1")} />
        </button>
      ))}
      <div className="ml-auto flex items-center">
        <button aria-label="显示隐藏的图标" className="flex w-6 justify-center">
          <Svg w={12} h={7}>
            <path d="M.5 6.500L6 1l5.500 5.500" />
          </Svg>
        </button>
        <button aria-label="同步" className="flex w-[25px] justify-center">
          <svg width="14" height="16" viewBox="0 0 14 16" aria-hidden="true">
            <path d="M7 0l7 4v8l-7 4-7-4V4z" fill="#fff" />
            <path d="M7 .5l6.500 4-6.500 4-6.500-4z" fill="#1673e6" />
            <path d="M1 7.500l6 3.500 6-3.500V10l-6 3.500L1 10z" fill="#1673e6" />
          </svg>
        </button>
        <button aria-label="网络" className="flex w-6 justify-center">
          <Svg w={16} h={14}>
            <path d="M3 2V.5h12.500v9H5M8 9.500v3M5 13h8M.5 3.500h3v3h-3zM2 6.500V13" />
          </Svg>
        </button>
        <button aria-label="音量" className="flex w-6 justify-center">
          <Svg w={16} h={14}>
            <path d="M1 5h2.500L7 1.500v11L3.500 9H1zM9 4.500c1 1.500 1 3.500 0 5M11 2.500c2 3 2 6 0 9M13 1c3 4 3 8 0 12" strokeWidth="1" />
          </Svg>
        </button>
        <button className="w-6 pt-0.5">中</button>
        <button aria-label="输入法" className="flex w-8 justify-center">
          <svg width="16" height="16" viewBox="0 0 16 16" aria-hidden="true">
            <rect x="1" y="1" width="14" height="14" rx="3" fill="#f4511e" />
            <path d="M12 4C8 2.500 4 3.500 4.500 6s7.500 1 7.500 3.500-4 3.500-8 2" fill="none" stroke="#fff" strokeWidth="2" />
          </svg>
        </button>
        <span className="ml-3 w-[14px] self-end pb-px">20</span>
      </div>
    </footer>
  );
}

function Arrow({ className, w, h, shaft, head }: { className: string; w: number; h: number; shaft: string; head: string }) {
  return (
    <svg width={w} height={h} viewBox={`0 0 ${w} ${h}`} className={clsx("pointer-events-none absolute z-20 overflow-visible drop-shadow-[2px_2px_2px_rgba(0,0,0,0.5)]", className)} aria-hidden="true">
      <path d={shaft} stroke="#fb0707" strokeWidth="4" strokeLinecap="round" />
      <path d={head} fill="#fb0707" />
    </svg>
  );
}

function Overlays() {
  return (
    <>
      <Arrow className="top-[51px] left-[125px]" w={16} h={90} shaft="M5 85L7 22" head="M8 0l6 27-7-3-6 2z" />
      <Arrow className="top-[308px] left-[83px]" w={40} h={108} shaft="M37 104L8 18" head="M1 0l15 21-6 1-8 5z" />
      <div className="pointer-events-none absolute right-0 bottom-[90px] z-20 w-[187px] font-['Open_Sans','Noto_Sans_CJK_SC',sans-serif] whitespace-nowrap text-[#8a8a8a]/60">
        <p className="text-xl leading-7">激活 Windows</p>
        <p className="text-[15px] leading-5">转到“设置”以激活 Windows</p>
      </div>
      <div className="absolute right-1 bottom-11 z-20 flex h-[26px] w-[61px] items-center justify-center gap-1 rounded-md border border-[#999] bg-white text-[13px] text-[#222] shadow-[0_0_4px_rgba(0,0,0,0.5)]">
        CH
        <Svg w={11} h={12}>
          <path d="M5 .5c3 2 3 7-4 8.500 3 3 9 2 9.500-2S8 .5 5 .5z" strokeWidth="1" />
        </Svg>
        简
      </div>
      <div className="pointer-events-none absolute right-[10px] bottom-[6px] z-20 flex items-center gap-0.5 opacity-70">
        <svg width="42" height="42" viewBox="0 0 42 42" aria-hidden="true">
          <path d="M42 1C24-1 4 8 1 22c-1 6 2 9 6 11C6 20 20 8 42 1z" fill="#2f9bd8" />
          <path d="M22 14c10-1 18 1 18 7 0 9-20 19-38 19 18-3 28-10 27-17-.5-4-4-6-7-9z" fill="#3f9a3f" />
        </svg>
        <div className="whitespace-nowrap">
          <p className="text-[21px] leading-6 font-bold text-[#2587bd]">极光下载站</p>
          <p className="text-[15px] leading-5 font-bold text-[#2f7d3a]">www.xz7.com</p>
        </div>
      </div>
    </>
  );
}

export default function App() {
  return (
    <div className="relative flex h-screen flex-col overflow-hidden font-['Open_Sans','Noto_Sans_CJK_SC',sans-serif]">
      <div className="relative min-h-0 flex-1 overflow-hidden">
        <BackWindow />
        <FrontWindow />
      </div>
      <TaskBar />
      <Overlays />
    </div>
  );
}
